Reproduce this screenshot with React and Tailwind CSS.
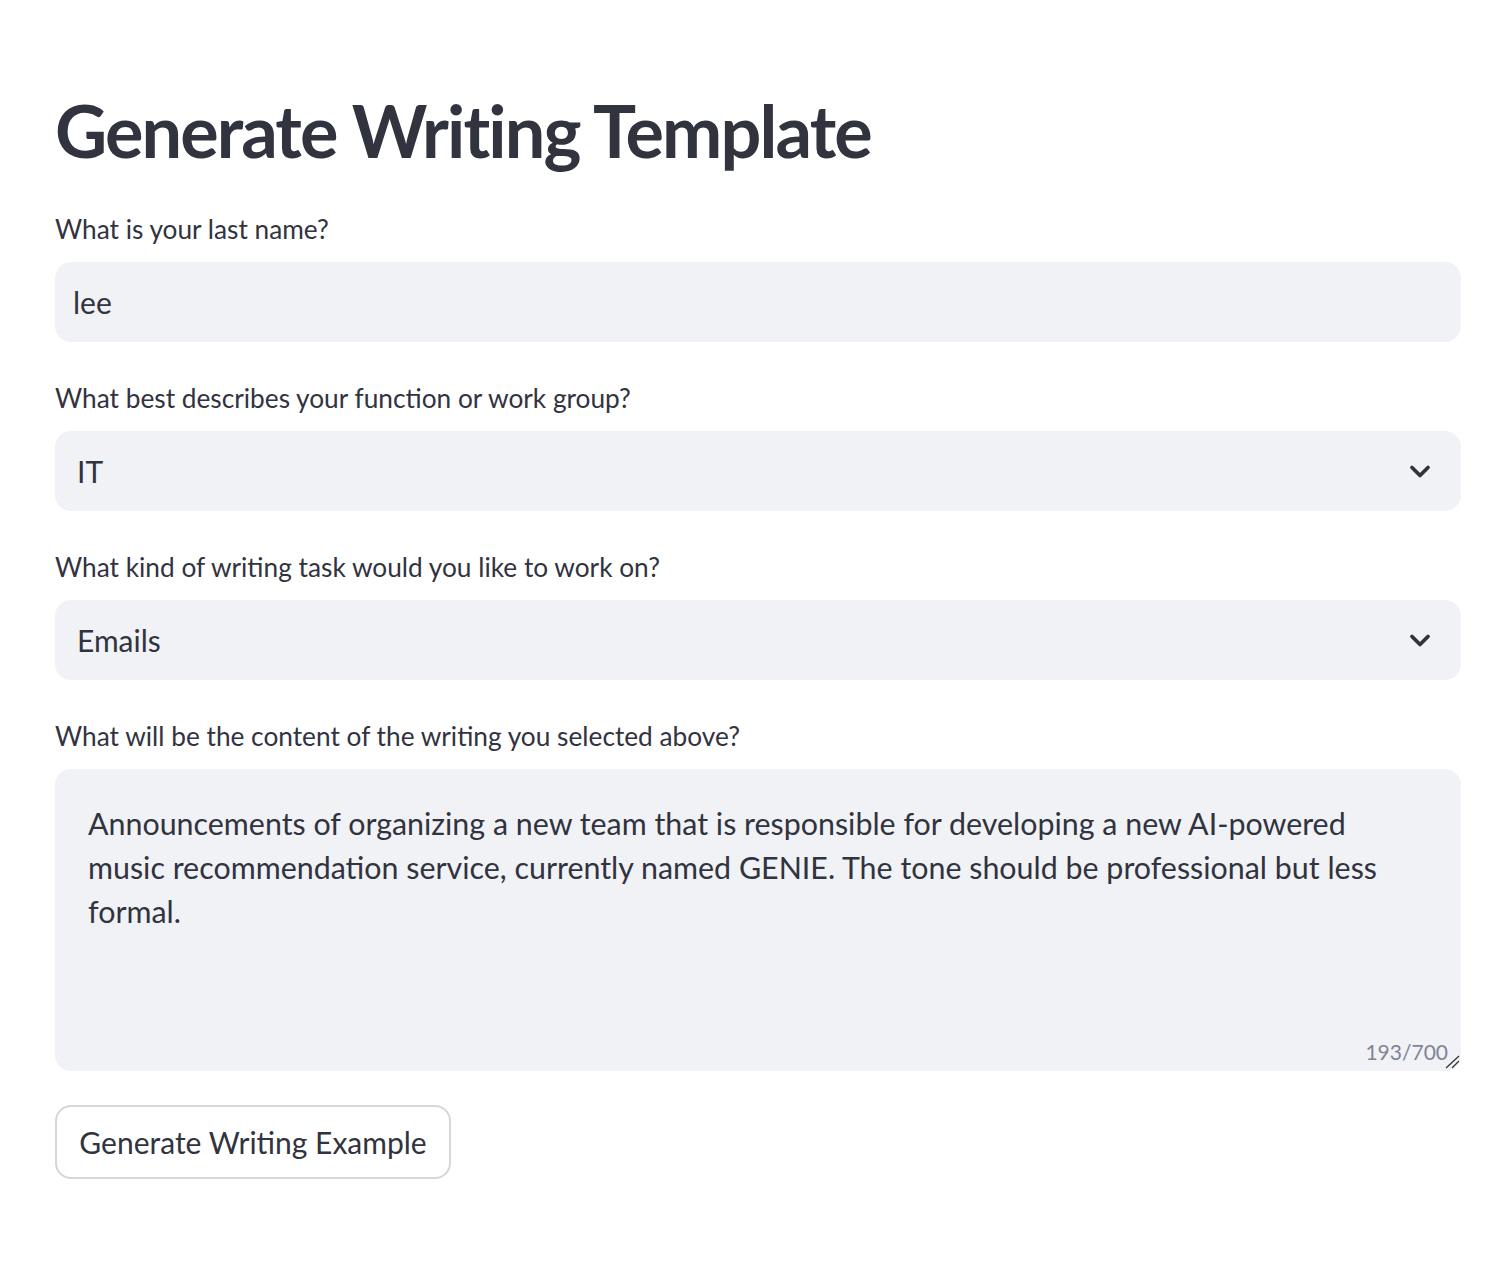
import React from "react";

const font = { fontFamily: "Lato, 'Noto Sans', sans-serif" };

function Chevron() {
  return (
    <svg width="22" height="15" viewBox="0 0 22 15" className="shrink-0">
      <polyline points="3,3.5 11,11.5 19,3.5" fill="none" stroke="#31333F" strokeWidth="3.8" strokeLinecap="round" strokeLinejoin="round" />
    </svg>
  );
}

function Label({ children }) {
  return (
    <div className="h-[44px] flex items-center text-[26.25px] text-[#31333F] mb-[10px] whitespace-nowrap">{children}</div>
  );
}

export default function App() {
  return (
    <div className="min-h-screen bg-white" style={font}>
      <div className="px-[55px] pt-[77px] pb-[80px] w-[1516px] max-w-full">
        <h1 className="text-[72px] font-bold leading-[106px] text-[#31333F] tracking-[-1.9px] mb-[25px] whitespace-nowrap">
          Generate Writing Template
        </h1>

        <div className="w-[1406px]">
          <Label>What is your last name?</Label>
          <div className="h-[80px] rounded-[16px] bg-[#F0F2F6] flex items-center pl-[18px] text-[30px] text-[#31333F]">lee</div>

          <div className="h-[35px]" />
          <Label>What best describes your function or work group?</Label>
          <div className="h-[80px] rounded-[16px] bg-[#F0F2F6] flex items-center justify-between pl-[22px] pr-[30px] text-[30px] text-[#31333F]">
            <span>IT</span>
            <Chevron />
          </div>

          <div className="h-[35px]" />
          <Label>What kind of writing task would you like to work on?</Label>
          <div className="h-[80px] rounded-[16px] bg-[#F0F2F6] flex items-center justify-between pl-[22px] pr-[30px] text-[30px] text-[#31333F]">
            <span>Emails</span>
            <Chevron />
          </div>

          <div className="h-[35px]" />
          <Label>What will be the content of the writing you selected above?</Label>
          <div className="relative h-[302px] rounded-[16px] bg-[#F0F2F6] pl-[33px] pt-[32px] text-[30.4px] leading-[44px] text-[#31333F]">
            <div className="whitespace-nowrap">Announcements of organizing a new team that is responsible for developing a new AI-powered</div>
            <div className="whitespace-nowrap">music recommendation service, currently named GENIE. The tone should be professional but less</div>
            <div className="whitespace-nowrap">formal.</div>
            <div className="absolute right-[13px] bottom-[9px] text-[21px] text-[#808495] leading-none">193/700</div>
            <svg width="18" height="16" viewBox="0 0 18 16" className="absolute right-[-1px] bottom-[1px]">
              <line x1="2" y1="14" x2="15" y2="2" stroke="#31333F" strokeWidth="1.3" />
              <line x1="8" y1="14" x2="15" y2="7" stroke="#31333F" strokeWidth="1.3" />
            </svg>
          </div>

          <div className="h-[34px]" />
          <button className="h-[74px] w-[396px] rounded-[16px] border-2 border-[#D6D6D9] bg-white text-[30px] text-[#31333F] flex items-center justify-center" style={font}>
            Generate Writing Example
          </button>
        </div>
      </div>
    </div>
  );
}
